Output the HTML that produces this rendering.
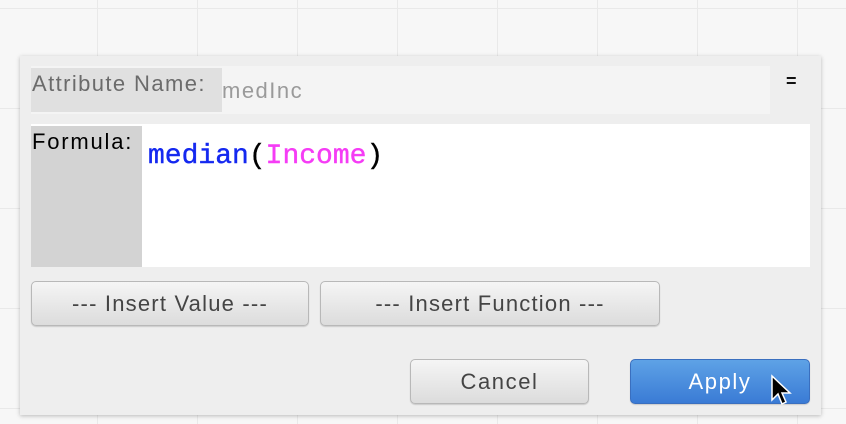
<!DOCTYPE html>
<html><head><style>
*{box-sizing:border-box;margin:0;padding:0}
body{width:846px;height:424px;overflow:hidden;position:relative;font-family:"Liberation Sans",sans-serif;
background-color:#f7f7f7;
background-image:linear-gradient(90deg,#e9e9e9 1px,transparent 1px),linear-gradient(#e9e9e9 1px,transparent 1px);
background-size:100px 100px;background-position:97px 8px}
.dlg{position:absolute;left:20px;top:56px;width:801px;height:359px;background:#eeeeee;box-shadow:0 1px 4px rgba(0,0,0,.25)}
.abs{position:absolute}
.btn{position:absolute;border:1px solid #b8b8b8;border-radius:5px;background:linear-gradient(#f5f5f5,#dcdcdc);color:#444;font-size:22px;letter-spacing:1.2px;text-align:center;box-shadow:0 1px 1px rgba(0,0,0,.15)}
</style></head><body>
<div class="dlg">
 <div class="abs" style="left:11px;top:10px;width:739px;height:48px;background:#f4f4f4"></div>
 <div class="abs" style="left:11px;top:12px;width:191px;height:44px;background:#e0e0e0;color:#6b6b6b;font-size:22px;letter-spacing:1.4px;padding:3px 0 0 1px;white-space:nowrap">Attribute Name:</div>
 <div class="abs" style="left:202px;top:22px;color:#9a9a9a;font-size:22px;letter-spacing:1.5px">medInc</div>
 <div class="abs" style="left:766px;top:15px;color:#111;font-size:18px;font-weight:bold">=</div>
 <div class="abs" style="left:11px;top:68px;width:779px;height:143px;background:#fff"></div>
 <div class="abs" style="left:11px;top:70px;width:111px;height:141px;background:#d3d3d3;color:#000;font-size:22px;letter-spacing:1.8px;padding:3px 0 0 1px">Formula:</div>
 <div class="abs" style="left:128px;top:85px;font-family:'Liberation Mono',monospace;font-size:28px;color:#000;-webkit-text-stroke:0.4px"><span style="color:#1428f0">median</span>(<span style="color:#f53cf5">Income</span>)</div>
 <div class="btn" style="left:11px;top:225px;width:278px;height:45px;line-height:43px">--- Insert Value ---</div>
 <div class="btn" style="left:300px;top:225px;width:340px;height:45px;line-height:43px">--- Insert Function ---</div>
 <div class="btn" style="left:390px;top:303px;width:179px;height:45px;line-height:43px;letter-spacing:1.6px">Cancel</div>
 <div class="btn" style="left:610px;top:303px;width:180px;height:45px;line-height:43px;letter-spacing:1.6px;background:linear-gradient(#5ea2e6,#3a7bd5);border-color:#3a6fbf;color:#fff">Apply</div>
 <svg class="abs" style="left:750px;top:318px" width="24" height="36" viewBox="0 0 24 36"><path d="M2 2 L2 26 L8 20 L12 30 L16 28 L12 19 L20 19 Z" fill="#000" stroke="#fff" stroke-width="1.5"/></svg>
</div>
</body></html>
